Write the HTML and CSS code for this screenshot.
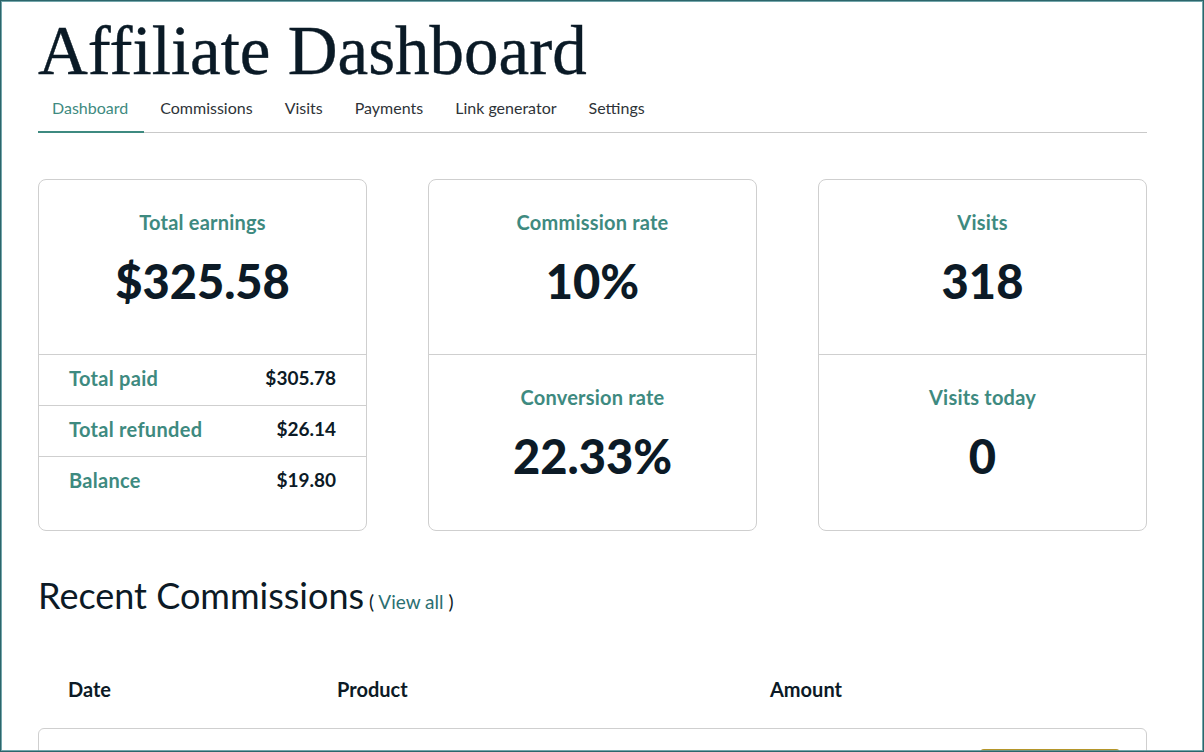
FILE: index.html
```html
<!DOCTYPE html>
<html lang="en">
<head>
<meta charset="utf-8">
<title>Affiliate Dashboard</title>
<link rel="stylesheet" href="styles.css">
</head>
<body>
<div class="page">
  <h1 class="title">Affiliate Dashboard</h1>
  <nav class="tabs">
    <a class="tab active">Dashboard</a>
    <a class="tab">Commissions</a>
    <a class="tab">Visits</a>
    <a class="tab">Payments</a>
    <a class="tab">Link generator</a>
    <a class="tab">Settings</a>
  </nav>

  <section class="cards">
    <div class="card">
      <div class="stat">
        <div class="stat-label">Total earnings</div>
        <div class="stat-value">$325.58</div>
      </div>
      <div class="rows">
        <div class="row"><span class="row-label">Total paid</span><span class="row-value">$305.78</span></div>
        <div class="row"><span class="row-label">Total refunded</span><span class="row-value">$26.14</span></div>
        <div class="row"><span class="row-label">Balance</span><span class="row-value">$19.80</span></div>
      </div>
    </div>
    <div class="card">
      <div class="stat">
        <div class="stat-label">Commission rate</div>
        <div class="stat-value">10%</div>
      </div>
      <div class="stat stat-bottom">
        <div class="stat-label">Conversion rate</div>
        <div class="stat-value">22.33%</div>
      </div>
    </div>
    <div class="card">
      <div class="stat">
        <div class="stat-label">Visits</div>
        <div class="stat-value">318</div>
      </div>
      <div class="stat stat-bottom">
        <div class="stat-label">Visits today</div>
        <div class="stat-value">0</div>
      </div>
    </div>
  </section>

  <section class="recent">
    <h2 class="recent-title">Recent Commissions<span class="view-all">( <a>View all</a> )</span></h2>
    <div class="table-head">
      <span class="th">Date</span>
      <span class="th">Product</span>
      <span class="th">Amount</span>
    </div>
    <div class="table-body">
      <div class="table-row">
        <span class="td"></span>
        <span class="td"></span>
        <span class="td td-action"><span class="btn"></span></span>
      </div>
    </div>
  </section>
</div>
<div class="frame"></div>
</body>
</html>
```

FILE: styles.css
```css
* { box-sizing: border-box; }

html, body {
  margin: 0;
  padding: 0;
  background: #ffffff;
  overflow: hidden;
}

body {
  font-family: "Lato", "Noto Sans", sans-serif;
  color: #0c1a26;
}

.page {
  width: 1109px;
  margin-left: 38px;
}

.title {
  margin: 0;
  padding-top: 16px;
  font-family: "Liberation Serif", "DejaVu Serif", serif;
  font-weight: 400;
  font-size: 69px;
  line-height: 70px;
  color: #0a1a26;
  -webkit-text-stroke: 0.4px #0a1a26;
}

.tabs {
  display: flex;
  border-bottom: 1px solid #c9c9c9;
}

.tab {
  padding: 10px 16px 11px 16px;
  font-size: 16px;
  line-height: 24px;
  color: #2e3338;
  border-bottom: 2px solid transparent;
  margin-bottom: -1px;
  text-decoration: none;
}

.tab:first-child { padding-left: 14px; padding-right: 16px; }

.tab.active {
  color: #3e8a80;
  border-bottom-color: #3e8a80;
}

.cards {
  margin-top: 46px;
  display: grid;
  grid-template-columns: repeat(3, 329px);
  column-gap: 61px;
}

.card {
  border: 1px solid #cfcfcf;
  border-radius: 8px;
  display: flex;
  flex-direction: column;
  height: 352px;
}

.stat {
  height: 175px;
  padding-top: 30px;
  text-align: center;
  border-bottom: 1px solid #cfcfcf;
}

.stat-bottom {
  border-bottom: none;
  flex: 1;
}

.stat-label {
  font-size: 20px;
  line-height: 24px;
  font-weight: 700;
  letter-spacing: 0.2px;
  color: #3e8a80;
}

.stat-value {
  margin-top: 19px;
  font-size: 47px;
  line-height: 56px;
  font-weight: 900;
  color: #0c1a26;
}

.rows {
  flex: 1;
  padding-bottom: 22px;
}

.row {
  display: flex;
  justify-content: space-between;
  padding: 11px 30px 15px 30px;
  line-height: 24px;
  border-bottom: 1px solid #cfcfcf;
}

.row:last-child { border-bottom: none; }

.row-label {
  font-size: 20px;
  font-weight: 700;
  letter-spacing: 0.3px;
  color: #3e8a80;
}

.row-value {
  font-size: 19px;
  font-weight: 700;
  color: #0c1a26;
}

.recent {
  margin-top: 44px;
}

.recent-title {
  margin: 0;
  font-size: 36px;
  line-height: 40px;
  font-weight: 400;
  color: #0c1a26;
}

.view-all {
  margin-left: 5px;
  font-size: 19px;
  color: #0c1a26;
}

.view-all a {
  color: #2b6f72;
}

.table-head {
  margin-top: 55px;
  display: grid;
  grid-template-columns: 269px 433px 1fr;
}

.th {
  padding: 0 30px;
  font-size: 20px;
  line-height: 24px;
  font-weight: 700;
  color: #0c1a26;
}

.table-body {
  margin-top: 27px;
  border: 1px solid #cfcfcf;
  border-radius: 6px;
}

.table-row {
  display: grid;
  grid-template-columns: 269px 433px 1fr;
  padding-top: 20px;
  padding-bottom: 20px;
}

.td-action {
  display: flex;
  justify-content: flex-end;
  padding-right: 26px;
}

.btn {
  display: inline-block;
  width: 140px;
  height: 40px;
  background: #b5962a;
  border-radius: 4px;
}

.frame {
  position: fixed;
  top: 0;
  left: 0;
  right: 0;
  bottom: 0;
  border: 1px solid #2c666b;
  box-shadow: inset 0 0 0 1px rgba(90, 150, 156, 0.85);
  pointer-events: none;
}
```
